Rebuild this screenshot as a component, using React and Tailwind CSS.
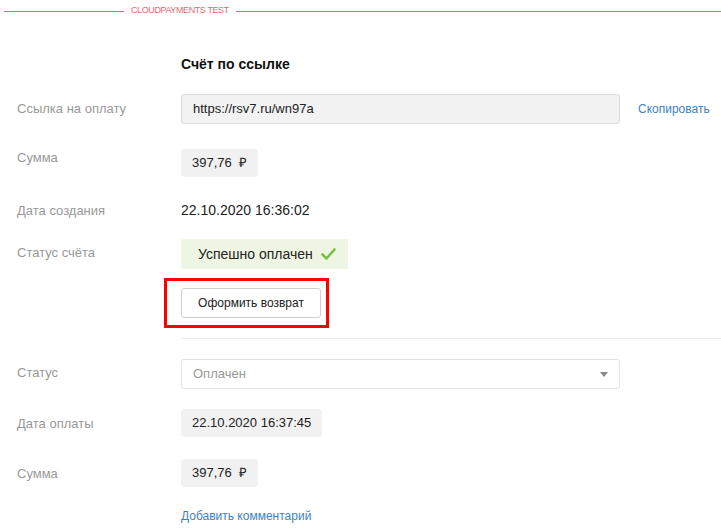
const font = { fontFamily: '"Liberation Sans", Arial, sans-serif' };

function Row({ label, labelPt = 'pt-0', children, className = '' }) {
  return (
    <div className={`flex items-start ${className}`}>
      <div className={`w-[181px] shrink-0 pl-[17px] text-[13px] leading-[15px] text-[#999] ${labelPt}`}>{label}</div>
      <div className="flex-1">{children}</div>
    </div>
  );
}

function Pill({ children }) {
  return (
    <div className="inline-flex h-[28px] items-center rounded-[4px] bg-[#f1f1f1] px-[11px] text-[13px] text-[#222]">
      {children}
    </div>
  );
}

export default function App() {
  return (
    <div className="min-h-[529px] w-[721px] bg-white" style={font}>
      {/* шапка */}
      <div className="flex h-[22px] items-center">
        <div className="ml-[4px] h-px w-[120px] bg-[#e06a72]" />
        <span className="px-[7px] text-[9px] uppercase tracking-[-0.4px] text-[#e06a72]">Cloudpayments test</span>
        <div className="h-px flex-1 bg-[#e06a72]" />
      </div>

      <div className="pl-[181px] pt-[34px] text-[14px] font-bold leading-[16px] text-[#111]">Счёт по ссылке</div>

      <Row label="Ссылка на оплату" labelPt="pt-[7px]" className="mt-[22px]">
        <div className="flex items-center">
          <div className="flex h-[30px] w-[439px] items-center rounded-[3px] border border-[#dcdcdc] bg-[#f2f2f2] px-[11px] text-[13px] text-[#222]">
            https://rsv7.ru/wn97a
          </div>
          <a className="ml-[18px] text-[12px] text-[#3b82c4]">Скопировать</a>
        </div>
      </Row>

      <Row label="Сумма" labelPt="pt-[1px]" className="mt-[25px]">
        <Pill>
          397,76 <span className="ml-[7px]">₽</span>
        </Pill>
      </Row>

      <Row label="Дата создания" className="mt-[26px]">
        <div className="text-[14px] leading-[15px] text-[#222]">22.10.2020 16:36:02</div>
      </Row>

      <Row label="Статус счёта" labelPt="pt-[6px]" className="mt-[21px]">
        <div className="inline-flex h-[30px] w-[167px] items-center rounded-[2px] bg-[#eef6e3] pl-[17px] text-[14px] text-[#222]">
          Успешно оплачен
          <svg className="ml-[8px]" width="15" height="12" viewBox="0 0 15 12">
            <path d="M1.5 6.5l4 4L13.5 1.5" fill="none" stroke="#7dbd4a" strokeWidth="2.6" strokeLinecap="round" strokeLinejoin="round" />
          </svg>
        </div>
      </Row>

      <div className="ml-[164px] mt-[9px] inline-flex h-[50px] w-[165px] items-center border-[3px] border-[#f00] pl-[14px]">
        <button className="h-[30px] w-[140px] rounded-[3px] border border-[#cfcfcf] bg-white text-[12px] text-[#222]">
          Оформить возврат
        </button>
      </div>

      <div className="ml-[181px] mt-[10px] h-px bg-[#ececec]" />

      <Row label="Статус" labelPt="pt-[6px]" className="mt-[20px]">
        <div className="flex h-[30px] w-[439px] items-center justify-between rounded-[3px] border border-[#e3e3e3] bg-white pl-[11px] pr-[11px] text-[13px] text-[#999]">
          Оплачен
          <svg width="8" height="5" viewBox="0 0 8 5">
            <path d="M0 0h8L4 5z" fill="#888" />
          </svg>
        </div>
      </Row>

      <Row label="Дата оплаты" labelPt="pt-[7px]" className="mt-[20px]">
        <Pill>22.10.2020 16:37:45</Pill>
      </Row>

      <Row label="Сумма" labelPt="pt-[7px]" className="mt-[22px]">
        <Pill>
          397,76 <span className="ml-[7px]">₽</span>
        </Pill>
      </Row>

      <div className="pl-[181px] pt-[20px] text-[12px] text-[#3b82c4]">Добавить комментарий</div>
    </div>
  );
}
